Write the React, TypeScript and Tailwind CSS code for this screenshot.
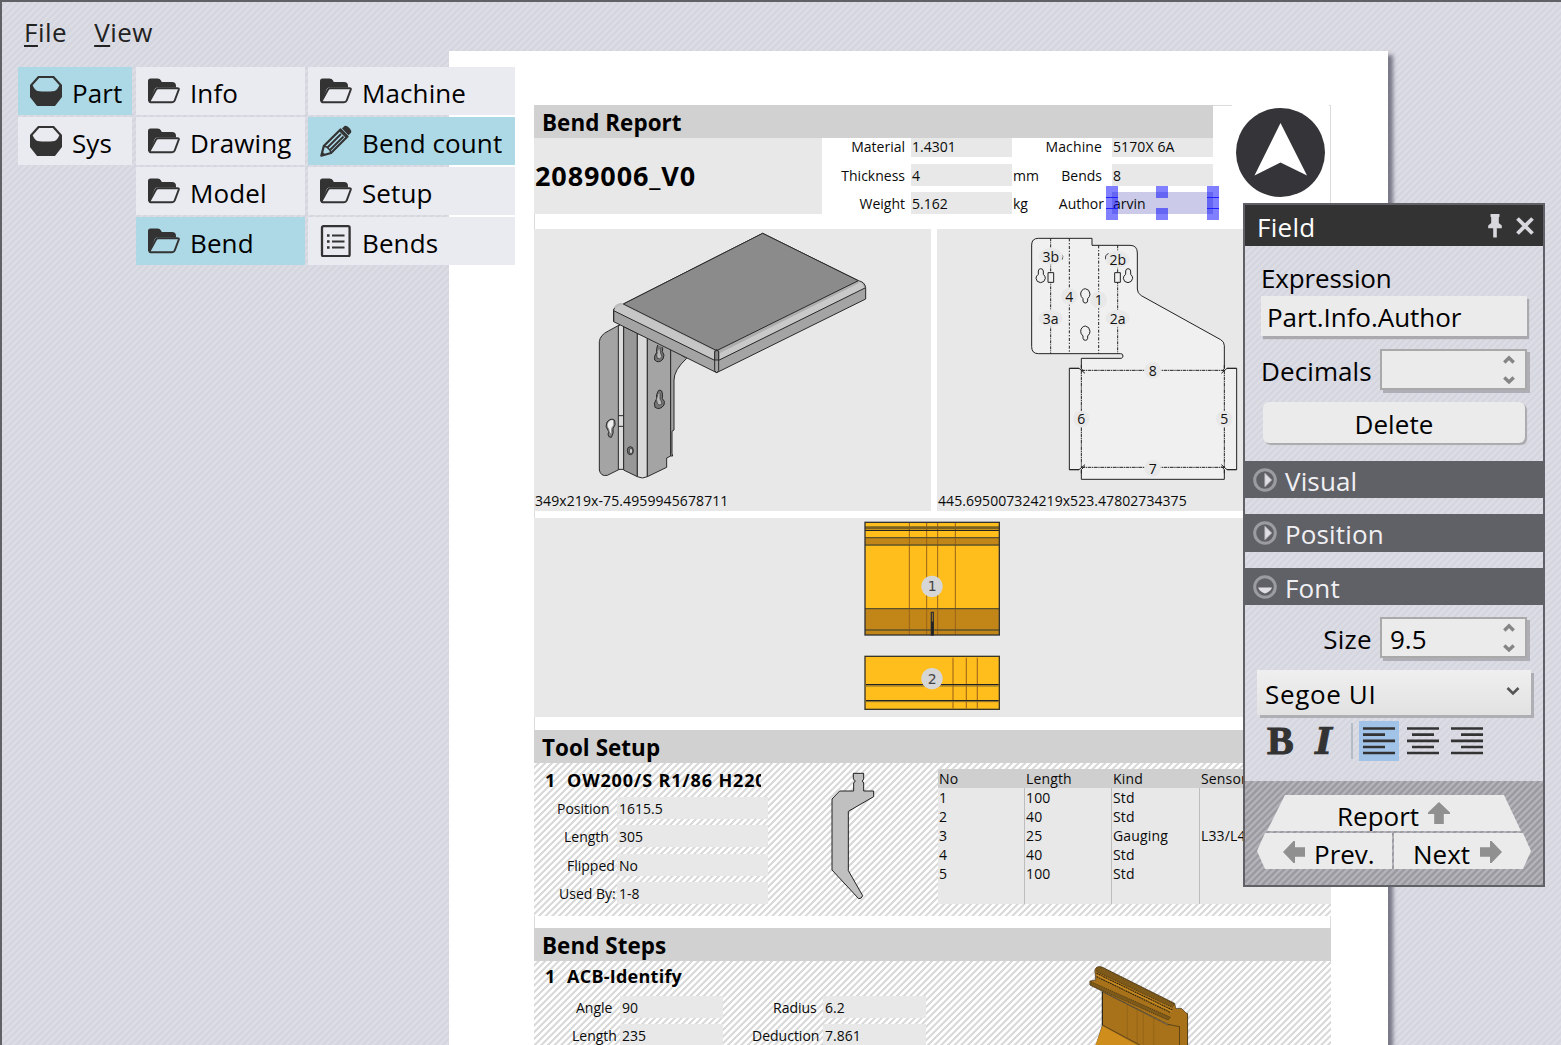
import React from "react";

const STRIPES =
  "bg-[repeating-linear-gradient(135deg,#d4d5de_0px,#d4d5de_1.4px,#dddde5_2.35px,#dddde5_3.7px,#d4d5de_4.714px)]";
const HATCH =
  "bg-[repeating-linear-gradient(135deg,#ffffff_0px,#ffffff_1.9px,#d9d9d9_2.6px,#d9d9d9_4px,#ffffff_4.714px)]";
const DARK_STRIPES =
  "bg-[repeating-linear-gradient(135deg,#9a9aa0_0px,#9a9aa0_1.4px,#b3b3b9_2.35px,#b3b3b9_3.7px,#9a9aa0_4.714px)]";

/* ---------- icons ---------- */

function NutIcon() {
  return (
    <svg className="h-8 w-8 shrink-0" viewBox="0 0 32 32" fill="none">
      <path d="M8 1h16L32 10v12L25 31h-18L0 22v-12z" fill="#333" />
      <path d="M9.200 3h13.600L29.300 10.200Q27.500 15 24.500 16Q16 17.200 7.500 16Q4.500 15 2.700 10.200z" className="fill-[var(--hole)]" />
    </svg>
  );
}

function FolderIcon() {
  return (
    <svg className="h-8 w-8 shrink-0" viewBox="0 0 32 32" fill="none">
      <path d="M0 26V6Q0 3.500 2.500 3.500H9.500Q12 3.500 13 5.500L13.800 7H24Q28 7 28 11V12.500H9Q7.500 12.800 6.800 14L1.500 27Z" fill="#333" />
      <path
        d="M10 13.200H29.500Q31.200 13.200 30.700 14.800L26.700 25.500Q26 27.300 24 27.300H2.500Q1.300 27.300 1.800 25.800L8 14.600Q8.800 13.200 10 13.200Z"
        stroke="#333"
        strokeWidth="2"
        className="fill-[var(--hole)]"
      />
    </svg>
  );
}

function PencilIcon() {
  return (
    <svg className="h-8 w-8 shrink-0" viewBox="0 0 32 32" fill="none">
      <path d="M1.300 30.700 3.800 21 20.500 4.500 27.500 11.500 11 28z" stroke="#333" strokeWidth="2.200" strokeLinejoin="round" />
      <path d="M22 3.500 24.500 1Q26.500 0 28.800 2.500L30 3.800Q32 6 31 7.800L28.500 10.200z" fill="#333" />
      <path d="M7.500 22.500 21 9M10 25 23.500 11.500" stroke="#333" strokeWidth="1.900" />
      <path d="M19.500 5.500 26.500 12.500" stroke="#333" strokeWidth="1.500" />
      <path d="M1 31 2.200 26.500 5.500 29.800z" fill="#333" />
      <path d="M3.800 21.200 6.800 22 10 25.200 11 28" stroke="#333" strokeWidth="1.600" />
    </svg>
  );
}

function ListIcon() {
  return (
    <svg className="h-8 w-8 shrink-0" viewBox="0 0 32 32" fill="none" stroke="#333">
      <rect x="2" y="1.200" width="27.600" height="30" rx="1.500" strokeWidth="2.300" />
      <path d="M12 10.500h12.500M12 16.500h12.500M12 22.500h12.500" strokeWidth="2.200" />
      <path d="M7 10.500h2.600M7 16.500h2.600M7 22.500h2.600" strokeWidth="2.600" />
    </svg>
  );
}

function AlignIcon({ kind }: { kind: "left" | "center" | "right" }) {
  const d =
    kind === "left"
      ? "M0 8.600H22M0 21H22"
      : kind === "center"
        ? "M5 8.600H27M5 21H27"
        : "M10 8.600H32M10 21H32";
  return (
    <svg className="h-[30px] w-8" viewBox="0 0 32 30" stroke="#333" strokeWidth="2.700" fill="none">
      <path d="M0 2.500H32M0 14.800H32M0 27H32" />
      <path d={d} />
    </svg>
  );
}

function SectionIcon({ open }: { open: boolean }) {
  return (
    <svg className="h-6 w-6 shrink-0" viewBox="0 0 24 24" fill="none">
      <circle cx="12" cy="12" r="10.300" stroke="#9b9ca1" strokeWidth="3" />
      {open ? (
        <path d="M5 12.500H19Q17 17 12 18.500Q7 17 5 12.500Z" fill="#e0e0e4" />
      ) : (
        <path d="M12 5.500V18.500L18.500 12Z" fill="#e0e0e4" stroke="#c5c5ca" />
      )}
    </svg>
  );
}

function SpinArrows() {
  return (
    <svg className="mr-[10px] h-[30px] w-3" viewBox="0 0 12 30" fill="none" stroke="#858585" strokeWidth="3.400">
      <path d="M1.300 7.500 6 2.800 10.700 7.500M1.300 22.500 6 27 10.700 22.500" />
    </svg>
  );
}

function Arrow({ className }: { className: string }) {
  return (
    <svg className={className} viewBox="0 0 22 22" fill="#909090">
      <path d="M11 0 22 10.500V12H15.800V22H6.200V12H0V10.500Z" />
    </svg>
  );
}

/* ---------- navigation tree ---------- */

type Kind = "nut" | "folder" | "pencil" | "list";

function TreeItem({ kind, text, active }: { kind: Kind; text: string; active?: boolean }) {
  return (
    <div
      className={
        "flex h-12 items-center gap-[10px] pl-3 " +
        (active ? "bg-[#add9e6] [--hole:#add9e6]" : "bg-[#eaebf1] [--hole:#eaebf1]")
      }
    >
      {kind === "nut" && <NutIcon />}
      {kind === "folder" && <FolderIcon />}
      {kind === "pencil" && <PencilIcon />}
      {kind === "list" && <ListIcon />}
      <span className="whitespace-nowrap pt-1 text-[26px] leading-[44px] tracking-[0.1px] text-black">{text}</span>
    </div>
  );
}

function Tree() {
  return (
    <div className="absolute left-[18px] top-[67px] flex items-start">
      <div className="mr-1 flex w-[114px] flex-col gap-[2px]">
        <TreeItem kind="nut" text="Part" active />
        <TreeItem kind="nut" text="Sys" />
      </div>
      <div className="mr-[3px] flex w-[169px] flex-col gap-[2px]">
        <TreeItem kind="folder" text="Info" />
        <TreeItem kind="folder" text="Drawing" />
        <TreeItem kind="folder" text="Model" />
        <TreeItem kind="folder" text="Bend" active />
      </div>
      <div className="flex w-[207px] flex-col gap-[2px]">
        <TreeItem kind="folder" text="Machine" />
        <TreeItem kind="pencil" text="Bend count" active />
        <TreeItem kind="folder" text="Setup" />
        <TreeItem kind="list" text="Bends" />
      </div>
    </div>
  );
}

/* ---------- drawings ---------- */

function BracketDrawing() {
  return (
    <svg className="h-[282px] w-[397px]" viewBox="-138 27 1191 846" stroke="#2a2a2a" strokeWidth="3" strokeLinejoin="round">
      <path d="M58 365Q60 345 85 333L118 315V748L82 766Q62 770 58 750Z" fill="#a4a4a4" />
      <path d="M115 318H131V748H115Z" fill="#dcdcdc" stroke="none" />
      <path d="M115 318V748M131 318V748M115 587H131M115 619H131M115 748H131" fill="none" />
      <path d="M131 320 172 340V770L131 750Z" fill="#989898" />
      <path d="M172 340 202 352V770Q187 778 172 770Z" fill="#dadada" />
      <path d="M202 352 272 385V708L260 714V742L202 770Z" fill="#a4a4a4" />
      <path d="M272 385 320 415Q282 450 282 480V630L276 634V700L278 708H272Z" fill="#a4a4a4" />
      <path d="M101 268Q112 250 130 252L548 40 835 182Q855 186 857 203V237L410 458 101 305Z" fill="#a4a4a4" />
      <path d="M101 272Q112 250 130 252L404 388V420Z" fill="#c6c6c6" stroke="none" />
      <path d="M104 264Q112 250 130 252L404 391" fill="none" stroke="#bbb" strokeWidth="6" />
      <path d="M416 420V393L830 182Q850 186 853 204Z" fill="#c9c9c9" stroke="none" />
      <path d="M418 395 835 185" fill="none" stroke="#adadad" strokeWidth="9" />
      <path d="M130 252 548 40 835 182 410 392Z" fill="#8b8b8b" />
      <path d="M101 272 404 421M416 421 855 204M404 394Q410 384 416 394V452L410 458 404 452ZM101 268V305" fill="none" />
      <path d="M404 396Q410 386 416 396V420H404Z" fill="#888" />
      <g fill="#777">
        <path d="M233 375Q228 390 230 397Q221 408 224 420Q236 432 249 417Q256 404 247 395Q250 385 246 381" />
        <path d="M235 512Q227 525 230 536Q219 550 225 562Q240 572 252 555Q257 543 247 536Q249 520 245 513Q240 508 235 512Z" />
        <ellipse cx="151" cy="692" rx="9" ry="12" />
      </g>
      <path d="M81 606Q94 592 104 601Q109 615 99 626Q102 640 94 652Q86 654 84 643Q90 634 84 631Q74 620 81 606Z" fill="#888" />
      <path d="M84 609Q91 598 99 601Q103 615 94 624Q92 635 94 642Q87 636 88 628Q80 618 84 609Z" fill="#eee" stroke="none" />
      <path d="M233 525Q226 540 232 550Q238 560 246 550Q244 542 240 537V520" fill="#b8b8b8" strokeWidth="2" />
      <path d="M232 396Q228 406 232 415Q240 420 246 410Q240 400 240 384" fill="#b8b8b8" strokeWidth="2" />
      <ellipse cx="153" cy="693" rx="5" ry="8" fill="#ccc" strokeWidth="2" />
    </svg>
  );
}

const BEND_LABELS: [number, number, string][] = [
  [362, 95, "3b"],
  [563, 104, "2b"],
  [418, 215, "4"],
  [506, 226, "1"],
  [362, 281, "3a"],
  [563, 281, "2a"],
  [668, 437, "8"],
  [454, 583, "6"],
  [883, 583, "5"],
  [668, 731, "7"],
];

function FlatDrawing() {
  return (
    <svg className="h-[282px] w-[394px]" viewBox="21 12 1182 846" fill="none" stroke="#222" strokeWidth="3">
      <path
        d="M325 40H486V61H600Q622 61 622 84V192Q622 205 634 212L872 344Q883 350 883 362V430H920V734H883V763H454V734H418V430H454V400H574Q579 398 579 393Q579 386 572 386H325Q305 386 305 365V60Q305 40 325 40Z"
        fill="#f0f0f0"
        stroke="none"
      />
      <path d="M454 430V400H574Q579 398 579 393Q579 386 572 386H325Q305 386 305 365V60Q305 40 325 40H486V61H600Q622 61 622 84V192Q622 205 634 212L872 344Q883 350 883 362V430M454 734V763H883V734M447 430H418V734H447M891 430H920V734H891" />
      <path d="M418 430H447L465 445M454 420V432L462 438M920 430H891L874 445M883 420V432L876 438M418 734H447L465 719M454 745V734L464 724M920 734H891L874 719M883 745V734L875 724" />
      <path d="M454 436H883M454 727H883M454 436V727M883 436V727" strokeDasharray="11 2 4 2" />
      <path d="M362 40V386M563 61V386" strokeDasharray="9 3 3 3" />
      <path d="M418 40V386M506 61V386" strokeDasharray="9 5 4 5" />
      <g fill="#f0f0f0">
        <path d="M354 143H371V172H354ZM554 143H571V172H554Z" />
        <path d="M325 148V138Q326 131 332 131Q339 131 340 138V148Q346 153 346 160Q344 172 332 173Q319 172 318 160Q318 153 325 148Z" />
        <path d="M587 148V138Q588 131 594 131Q601 131 602 138V148Q608 153 608 160Q606 172 594 173Q581 172 580 160Q580 153 587 148Z" />
        <path d="M459 221V228Q460 234 466 234Q472 234 473 228V221Q480 215 480 207Q479 193 466 191Q453 193 452 207Q452 215 459 221Z" />
        <path d="M459 333V340Q460 346 466 346Q472 346 473 340V333Q480 327 480 319Q479 305 466 303Q453 305 452 319Q452 327 459 333Z" />
      </g>
      <path d="M394 87Q402 95 396 104M536 86Q525 88 527 103" />
      {BEND_LABELS.map(([x, y, t]) => (
        <g key={t} stroke="none">
          <ellipse cx={x} cy={y - 1} rx={t.length > 1 ? 36 : 25} ry="25" fill="#e8e8e8" />
          <text x={x} y={y + 15} fontSize="42" textAnchor="middle" fill="#111">
            {t}
          </text>
        </g>
      ))}
    </svg>
  );
}

function ToolsDrawing() {
  return (
    <svg className="h-[199px] w-[797px]" viewBox="-948 24 2391 597" fill="none">
      <rect x="45" y="37" width="403" height="338" fill="#ffbe1b" />
      <path d="M45 84H448V104H45ZM45 296H448V375H45Z" fill="#c18518" />
      <path d="M178 38V375M230 38V375M263 38V375M316 38V375" stroke="#9a6418" strokeWidth="3" />
      <path d="M45 53H448" stroke="#7a6023" strokeWidth="8" />
      <path d="M45 61H448" stroke="#222" strokeWidth="4" />
      <path d="M45 83H448M45 105H448M45 296H448M45 360H448" stroke="#5e522a" strokeWidth="4" />
      <rect x="45" y="37" width="403" height="338" stroke="#333" strokeWidth="4" />
      <path d="M244 307H250V375H244Z" stroke="#333" strokeWidth="4" />
      <path d="M247 335V375" stroke="#222" strokeWidth="7" />
      <rect x="45" y="439" width="403" height="159" fill="#ffbe1b" stroke="#3b3727" strokeWidth="4" />
      <path d="M309 443V596M349 443V596M382 443V596" stroke="#a66c18" strokeWidth="3.500" />
      <path d="M48 524H446M48 572H446" stroke="#222" strokeWidth="4" />
      <path d="M48 528H446M48 575H446" stroke="#8a7030" strokeWidth="3" />
      <circle cx="246" cy="229" r="32" fill="#d6d6d6" />
      <circle cx="246" cy="506" r="32" fill="#d6d6d6" />
      <g fill="#444" fontSize="42" textAnchor="middle" className="font-['DejaVu_Sans']">
        <text x="247" y="244">1</text>
        <text x="247" y="521">2</text>
      </g>
    </svg>
  );
}

function PunchDrawing() {
  return (
    <svg className="h-[134px] w-[55px]" viewBox="900 132 165 402" fill="#c0c0c0" stroke="#222" strokeWidth="3">
      <path d="M985 145H1016V162L1012 168L1016 174V198H1046V215L970 259V437L1013 512Q1010 522 1001 521L921 435V222L944 198H986V174L991 168L985 162Z" />
    </svg>
  );
}

function StepDrawing() {
  return (
    <svg className="h-[84px] w-[107px]" viewBox="1254 153 240 252" preserveAspectRatio="none" stroke="#2b2416" strokeWidth="1.500">
      <path d="M1293 245 1440 345 1484 310V410H1278L1293 345Z" fill="#a8721a" />
      <path d="M1293 348 1377 410H1276Z" fill="#cf8d1c" stroke="none" />
      <path d="M1293 345 1377 405" />
      <path d="M1276 180Q1280 166 1292 171L1455 280 1458 296 1470 295 1484 313V410H1466V350L1440 343 1265 225V213L1278 210Z" fill="#a8721a" />
      <path d="M1280 176Q1286 168 1294 173L1455 282 1450 292 1280 185Z" fill="#7e5a1a" strokeDasharray="3 2" />
      <path d="M1267 215 1446 322 1440 330 1267 226Z" fill="#7e5a1a" strokeDasharray="3 2" />
      <path d="M1280 190 1450 300M1280 200 1446 308" fill="none" stroke="#1f1a10" strokeWidth="2.500" strokeDasharray="4 2" />
      <path d="M1280 195 1449 304" fill="none" stroke="#d99a25" strokeWidth="2" />
      <path d="M1349 285V385M1371 298V400M1385 305V405M1408 320V405" stroke="#8b5d18" />
      <path d="M1293 245V345" strokeWidth="2.500" />
    </svg>
  );
}

/* ---------- report ---------- */

function SectionTitle({ children }: { children: React.ReactNode }) {
  return (
    <div className="h-[33px] bg-[#d1d1d1] pl-2 pt-px text-[22.4px] font-bold leading-[34px] tracking-[0.06px] text-black">{children}</div>
  );
}

function HeaderField({ label, value, h, lh, pr, selected }: { label: string; value: string; h: string; lh: string; pr: string; selected?: boolean }) {
  return (
    <div className={"flex " + h}>
      <div className={"w-[89px] text-right " + pr + " " + lh}>{label}</div>
      <div className={"relative w-[101px] pl-px " + lh + (selected ? " bg-[#cbcbe9]" : " bg-[#e8e8e8]")}>
        {value}
        {selected && (
          <div className="absolute -inset-x-[6px] -inset-y-[6px] flex justify-between">
            <div className="flex h-[34px] w-3 items-center bg-[#0000ff]/50">
              <div className="h-3 w-3 border-y border-[#1f1fff]" />
            </div>
            <div className="flex h-[34px] w-[13px] flex-col justify-between pr-px">
              <div className="h-3 bg-[#0000ff]/50" />
              <div className="h-3 bg-[#0000ff]/50" />
            </div>
            <div className="flex h-[34px] w-3 items-center bg-[#0000ff]/50">
              <div className="h-3 w-3 border-y border-[#1f1fff]" />
            </div>
          </div>
        )}
      </div>
    </div>
  );
}

function ReportHeader() {
  return (
    <div className="flex h-[109px]">
      <div className="w-[679px]">
        <SectionTitle>Bend Report</SectionTitle>
        <div className="flex h-[76px]">
          <div className="w-[288px] bg-[#e8e8e8] pl-px pt-px text-[27px] font-bold leading-[74px] tracking-[0.9px] text-black">2089006_V0</div>
          <div className="flex w-[190px] flex-col justify-between">
            <HeaderField label="Material" value="1.4301" h="h-[19px]" lh="leading-[18px]" pr="pr-[6px]" />
            <HeaderField label="Thickness" value="4" h="h-[22px]" lh="leading-[24px]" pr="pr-[6px]" />
            <HeaderField label="Weight" value="5.162" h="h-[22px]" lh="leading-[24px]" pr="pr-[6px]" />
          </div>
          <div className="w-[11px] whitespace-nowrap pl-px pt-[26px] leading-[24px]">
            <div>mm</div>
            <div className="pt-1">kg</div>
          </div>
          <div className="flex w-[190px] flex-col justify-between">
            <HeaderField label="Machine" value="5170X 6A" h="h-[19px]" lh="leading-[18px] tracking-[0.12px]" pr="pr-[10px]" />
            <HeaderField label="Bends" value="8" h="h-[22px]" lh="leading-[24px]" pr="pr-[10px]" />
            <HeaderField label="Author" value="arvin" h="h-[22px]" lh="leading-[24px]" pr="pr-[8px]" selected />
          </div>
        </div>
      </div>
      <div className="flex flex-1 border-t border-[#dcdcdc] pl-[19px]">
        <div className="-mt-px w-[97px] bg-white pl-1 pt-[3px]">
          <svg className="h-[89px] w-[89px]" viewBox="0 0 89 89">
            <circle cx="44.500" cy="44.500" r="44.500" fill="#353438" />
            <path d="M44.500 15 71 67.500 44.500 54.500 18.500 67.500Z" fill="#fff" />
          </svg>
        </div>
      </div>
    </div>
  );
}

function Field({ label, lp, value, lw, vw }: { label: string; lp: string; value: string; lw: string; vw: string }) {
  return (
    <div className="flex h-[22px] leading-[24px]">
      <div className={"whitespace-nowrap " + lw + " " + lp}>{label}</div>
      <div className={"bg-[#e8e8e8] pl-[2px] " + vw}>{value}</div>
    </div>
  );
}

const COLUMNS: { head: string; cells: string[]; w: string }[] = [
  { head: "No", cells: ["1", "2", "3", "4", "5"], w: "w-[87px]" },
  { head: "Length", cells: ["100", "40", "25", "40", "100"], w: "w-[87px]" },
  { head: "Kind", cells: ["Std", "Std", "Gauging", "Std", "Std"], w: "w-[88px]" },
  { head: "Sensor", cells: ["", "", "L33/L4", "", ""], w: "w-[131px]" },
];

function ToolTable() {
  return (
    <div className="mt-[6px] flex h-[135px] bg-[#e8e8e8] leading-[19px] tracking-[0.15px]">
      {COLUMNS.map((c, i) => (
        <div key={c.head} className={c.w}>
          <div className="h-[19px] bg-[#cfcfcf] pl-px">{c.head}</div>
          <div className={"h-[116px] border-[#bdbdbd] pl-px " + (i < 3 ? "border-r" : "")}>
            {c.cells.map((v, k) => (
              <div key={k} className="h-[19px]">{v}</div>
            ))}
          </div>
        </div>
      ))}
    </div>
  );
}

function Report() {
  return (
    <div className="ml-[449px] h-[994px] w-[939px] bg-white pl-[85px] pt-[54px] shadow-[5px_4px_4px_rgba(80,80,95,0.7)]">
      <div className="h-[940px] w-[797px] border-x border-[#dcdcdc]">
        <div className="-mx-px text-[14px] text-[#0a0a0a]">
          <ReportHeader />
          <div className="mt-[15px] flex h-[282px] gap-[6px]">
            <div className="relative w-[397px] bg-[#e8e8e8]">
              <BracketDrawing />
              <div className="absolute bottom-0 left-[1px] leading-[20px] tracking-[0.1px]">349x219x-75.4959945678711</div>
            </div>
            <div className="relative w-[394px] bg-[#e8e8e8]">
              <FlatDrawing />
              <div className="absolute bottom-0 left-[1px] leading-[20px] tracking-[0.06px]">445.695007324219x523.47802734375</div>
            </div>
          </div>
          <div className="mt-[7px] h-[199px] bg-[#e8e8e8]">
            <ToolsDrawing />
          </div>
          <div className="mt-[13px]">
            <SectionTitle>Tool Setup</SectionTitle>
            <div className={"flex h-[153px] " + HATCH}>
              <div className="w-[291px]">
                <div className="flex h-[34px] w-[227px] overflow-hidden whitespace-nowrap pl-[11px] pt-px text-[18px] font-bold leading-[33px] text-black">
                  <span className="w-[22px] shrink-0">1</span>
                  <span className="tracking-[0.85px]">OW200/S R1/86 H220</span>
                </div>
                <div className="flex flex-col gap-[6px]">
                  <Field label="Position" lp="pl-[23px]" value="1615.5" lw="w-[83px]" vw="w-[151px]" />
                  <Field label="Length" lp="pl-[30px]" value="305" lw="w-[83px]" vw="w-[151px]" />
                  <div className="-mt-1.5 h-px" />
                  <Field label="Flipped" lp="pl-[33px]" value="No" lw="w-[83px]" vw="w-[151px]" />
                  <Field label="Used By:" lp="pl-[25px]" value="1-8" lw="w-[83px]" vw="w-[151px]" />
                </div>
              </div>
              <div className="w-[113px] pt-[6px]">
                <PunchDrawing />
              </div>
              <ToolTable />
            </div>
          </div>
          <div className="mt-3">
            <SectionTitle>Bend Steps</SectionTitle>
            <div className={"flex h-[84px] overflow-hidden " + HATCH}>
              <div className="w-[551px]">
                <div className="flex h-[35px] pl-[11px] text-[18px] font-bold leading-[31px] text-black">
                  <span className="w-[22px] shrink-0">1</span>
                  <span className="tracking-[0.25px]">ACB-Identify</span>
                </div>
                <div className="flex">
                  <div className="flex flex-col gap-[6px]">
                    <Field label="Angle" lp="pl-[42px]" value="90" lw="w-[86px]" vw="w-[103px]" />
                    <Field label="Length" lp="pl-[38px]" value="235" lw="w-[86px]" vw="w-[103px]" />
                  </div>
                  <div className="flex flex-col gap-[6px]">
                    <Field label="Radius" lp="pl-[50px]" value="6.2" lw="w-[100px]" vw="w-[103px]" />
                    <Field label="Deduction" lp="pl-[29px]" value="7.861" lw="w-[100px]" vw="w-[103px]" />
                  </div>
                </div>
              </div>
              <StepDrawing />
            </div>
          </div>
        </div>
      </div>
    </div>
  );
}

/* ---------- field panel ---------- */

function PanelSection({ title, open, mt, h }: { title: string; open: boolean; mt: string; h: string }) {
  return (
    <div className={"flex bg-[#606166] pl-2 text-[26px] text-[#f0f0f4] " + mt + " " + h}>
      <div className="pt-[7px]">
        <SectionIcon open={open} />
      </div>
      <div className="pl-2 pt-px leading-[38px] tracking-[0.15px]">{title}</div>
    </div>
  );
}

function NumberBox({ value }: { value: string }) {
  return (
    <div className="flex h-[41px] w-[147px] items-center justify-between border-2 border-[#a9a9a9] bg-[#ebebeb] pl-[8px] shadow-[3px_3px_0px_#aeaeb4]">
      <span className="pt-[3px] leading-[36px]">{value}</span>
      <SpinArrows />
    </div>
  );
}

function FieldPanel() {
  return (
    <div className={"absolute left-[1243px] top-[203px] flex h-[684px] w-[302px] flex-col border-2 border-[#606166] text-[26px] text-black " + STRIPES}>
      <div className="flex h-[41px] items-center bg-[#333] pl-3 text-white">
        <span className="flex-1 pt-[2px] leading-[38px] tracking-[0.3px]">Field</span>
        <svg className="h-6 w-[14px]" viewBox="0 0 14 24" fill="#d8d8de">
          <path d="M2.500 0H11.500V2.500L10.800 3.500V9L13.800 11.500V14.300H8.800V23.500H5.200V14.300H0.200V11.500L3.200 9V3.500L2.500 2.500Z" />
        </svg>
        <svg className="ml-[14px] mr-[9px] h-[18px] w-[18px]" viewBox="0 0 18 18" stroke="#d8d8de" strokeWidth="3.800" fill="none">
          <path d="M1.500 1.500 16.500 16.500M16.500 1.500 1.500 16.500" />
        </svg>
      </div>
      <div className="pl-4 pt-[15px] leading-[34px] tracking-[-0.15px]">Expression</div>
      <div className="ml-4 mt-px h-[40px] w-[266px] bg-[#ebebeb] pl-[6px] pt-[2px] leading-[38px] tracking-[-0.05px] shadow-[2px_3px_1px_#a9a9ae]">Part.Info.Author</div>
      <div className="mt-[13px] flex h-[41px] pl-4">
        <div className="w-[119px] pt-[3px] leading-[38px] tracking-[0.1px]">Decimals</div>
        <NumberBox value="" />
      </div>
      <button className="ml-[18px] mt-[12px] h-[41px] w-[262px] rounded-[6px] bg-[#ebebeb] pt-[2px] leading-[38px] tracking-[0.1px] shadow-[2px_2px_1px_#a9a9ae]">Delete</button>
      <PanelSection title="Visual" open={false} mt="mt-[18px]" h="h-[37px]" />
      <PanelSection title="Position" open={false} mt="mt-[16px]" h="h-[38px]" />
      <PanelSection title="Font" open mt="mt-[16px]" h="h-[37px]" />
      <div className="mt-[12px] flex h-[41px]">
        <div className="w-[135px] pr-2 pt-[3px] text-right leading-[38px] tracking-[0.3px]">Size</div>
        <NumberBox value="9.5" />
      </div>
      <div className="ml-3 mt-[12px] flex h-[45px] w-[274px] items-center justify-between bg-gradient-to-b from-[#efefef] to-[#e2e2e2] pl-2 pr-[11px] shadow-[3px_3px_0px_#aeaeb4]">
        <span className="pt-[3px] leading-[40px] tracking-[0.65px]">Segoe UI</span>
        <svg className="-mt-1 h-3 w-[14px]" viewBox="0 0 14 12" fill="none" stroke="#555" strokeWidth="2.600">
          <path d="M1.500 3 7 8.500 12.500 3" />
        </svg>
      </div>
      <div className="mt-[6px] flex h-[40px] items-center">
        <span className="ml-[22px] w-[28px] font-['Liberation_Serif',serif] text-[40px] font-bold leading-[40px] text-[#333] [-webkit-text-stroke:1px_#333]">B</span>
        <span className="ml-[20px] w-[24px] font-['DejaVu_Serif',serif] text-[37px] font-bold italic leading-[40px] text-[#333] [-webkit-text-stroke:0.6px_#333]">I</span>
        <div className="ml-3 h-9 w-[2px] bg-[#b4bcc6]" />
        <div className="ml-[6px] flex h-10 w-10 items-center justify-center bg-[#a2c3e8]">
          <AlignIcon kind="left" />
        </div>
        <div className="ml-2">
          <AlignIcon kind="center" />
        </div>
        <div className="ml-3">
          <AlignIcon kind="right" />
        </div>
      </div>
      <div className={"mt-[20px] flex-1 pl-3 pt-[14px] " + DARK_STRIPES}>
        <div className="ml-[10px] flex h-[36px] w-[254px] bg-[#ebebeb] pl-[70px] [clip-path:polygon(18px_0,237px_0,254px_100%,0_100%)]">
          <span className="w-[83px] pt-[3px] leading-[36px]">Report</span>
          <Arrow className="ml-[8px] mt-[7px] h-[22px] w-[22px]" />
        </div>
        <div className="mt-[2px] flex h-[36px] gap-[2px]">
          <div className="flex w-[135px] bg-[#ebebeb] pl-[26px] [clip-path:polygon(8px_0,100%_0,100%_100%,8px_100%,0_50%)]">
            <Arrow className="mt-[8px] h-[22px] w-[22px] -rotate-90" />
            <span className="pl-[9px] pt-[3px] leading-[36px]">Prev.</span>
          </div>
          <div className="flex w-[137px] bg-[#ebebeb] pl-[19px] [clip-path:polygon(0_0,129px_0,100%_50%,129px_100%,0_100%)]">
            <span className="w-[58px] pt-[3px] leading-[36px]">Next</span>
            <Arrow className="ml-[9px] mt-[8px] h-[22px] w-[22px] rotate-90" />
          </div>
        </div>
      </div>
    </div>
  );
}

export default function App() {
  return (
    <div className={"relative h-[1045px] w-[1561px] overflow-hidden font-['Open_Sans',sans-serif] " + STRIPES}>
      <div className="border-l-2 border-t-2 border-[#606166]">
        <div className="flex h-[49px] gap-[27px] pl-[22px] pt-[10px] text-[26px] leading-[40px] tracking-[0.5px] text-[#222]">
          <span>
            <span className="underline decoration-2 underline-offset-[3px]">F</span>ile
          </span>
          <span>
            <span className="underline decoration-2 underline-offset-[3px]">V</span>iew
          </span>
        </div>
        <div className="-ml-[2px]">
          <Report />
        </div>
      </div>
      <Tree />
      <FieldPanel />
    </div>
  );
}
